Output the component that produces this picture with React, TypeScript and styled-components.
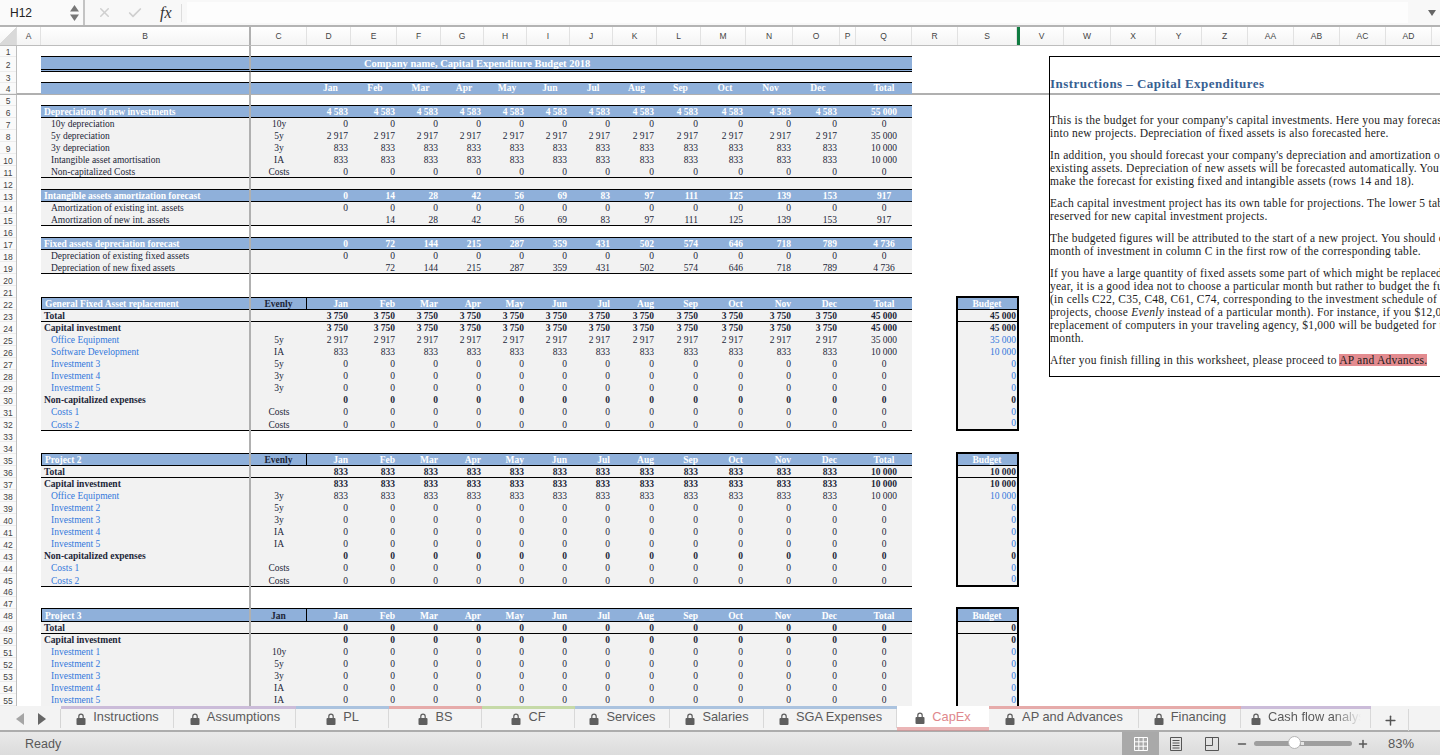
import styled, { createGlobalStyle } from 'styled-components';
import { Check, Minus, Plus, X } from 'lucide-react';

const GlobalStyle = createGlobalStyle`
  html, body {
    margin: 0;
    padding: 0;
    background: #fff;
    overflow: hidden;
  }
`;

const SHEET_COLUMNS = '17px 24px 210px 56px 44px 46px 44px 43px 43px 43px 43px 44px 44px 45px 47px 47px 16px 56px 44px 63px 1fr';

const sans = `"Liberation Sans", Arial, sans-serif`;
const serif = `"Liberation Serif", "Times New Roman", serif`;

const Page = styled.div`
  display: flex;
  flex-direction: column;
  width: 1440px;
  height: 755px;
  overflow: hidden;
  font-family: ${sans};

  > * {
    flex: none;
  }
`;

/* formula bar */
const FormulaBar = styled.div`
  display: flex;
  align-items: center;
  box-sizing: border-box;
  height: 27px;
  background: #f8f8f8;
  border-bottom: 2px solid #b4b4b4;
`;

const NameBox = styled.div`
  display: flex;
  align-items: center;
  justify-content: space-between;
  box-sizing: border-box;
  width: 85px;
  height: 100%;
  padding: 0 4px 0 10px;
  border-right: 2px solid #c4c4c4;
  background: #fafafa;
  font-size: 12px;
  color: #222;
`;

const Stepper = styled.svg`
  width: 9px;
  height: 18px;
  fill: #777;
`;

const BarIcons = styled.div`
  display: flex;
  align-items: center;
  gap: 15px;
  width: 102px;
  height: 100%;
  padding-left: 12px;
  box-sizing: border-box;
  color: #cfcfcf;
`;

const FxLabel = styled.span`
  margin-left: 2px;
  padding-right: 9px;
  border-right: 1px solid #ddd;
  font-family: ${serif};
  font-style: italic;
  font-size: 16px;
  color: #333;
`;

const FormulaInput = styled.div`
  flex: 1;
  height: 21px;
  margin-right: 24px;
  background: #fdfdfd;
`;

const Dropdown = styled.svg`
  position: relative;
  left: -4px;
  width: 8px;
  height: 6px;
  fill: #666;
`;

/* column letters */
const ColumnStrip = styled.div`
  display: flex;
  height: 19px;
  box-sizing: border-box;
  background: linear-gradient(#ffffff, #f4f4f4);
  border-bottom: 1px solid #bdbdbd;
`;

const Corner = styled.div`
  width: 17px;
  flex: none;
  background: linear-gradient(135deg, transparent 50%, #d9d9d9 50%);
  border-right: 1px solid #ddd;
  box-sizing: border-box;
`;

const ColumnName = styled.div<{ $w: number; $freeze?: boolean }>`
  display: flex;
  align-items: center;
  justify-content: center;
  flex: none;
  box-sizing: border-box;
  width: ${p => p.$w}px;
  border-right: ${p => (p.$freeze ? '2px solid #b0b0b0' : '1px solid #e2e2e2')};
  font-size: 8.5px;
  color: #444;
`;

const GreenMark = styled.div`
  width: 3px;
  flex: none;
  background: #107c41;
`;

/* grid */
const Sheet = styled.div`
  position: relative;
  height: 660px;
  overflow: hidden;
  background: #fff;
`;

const SheetRow = styled.div<{ $h: number; $freeze?: boolean }>`
  display: grid;
  grid-template-columns: ${SHEET_COLUMNS};
  box-sizing: border-box;
  height: ${p => p.$h}px;
  border-bottom: ${p => (p.$freeze ? '2px solid #b0b0b0' : '0')};
`;

const RowNumber = styled.div`
  display: flex;
  align-items: center;
  justify-content: center;
  box-sizing: border-box;
  padding-top: 1px;
  background: #fafafa;
  border-right: 1px solid #bdbdbd;
  box-shadow: inset 0 -1px 0 #ececec;
  font-size: 8.5px;
  color: #444;
`;

type Tone = 'head' | 'grey' | 'none';
type Ink = 'white' | 'dark' | 'blue';
type Rule = 'thin' | 'double' | 'none';

const tones: Record<Tone, string> = { head: '#8fb0da', grey: '#f2f2f2', none: 'transparent' };
const inks: Record<Ink, string> = { white: '#ffffff', dark: '#1c2638', blue: '#3278dc' };

const Cell = styled.div<{
  $tone?: Tone;
  $ink?: Ink;
  $bold?: boolean;
  $align?: 'left' | 'right' | 'center';
  $rule?: Rule;
  $pad?: number;
  $freeze?: boolean;
  $boxLeft?: boolean;
  $boxRight?: boolean;
}>`
  display: flex;
  align-items: flex-end;
  justify-content: ${p => (p.$align === 'right' ? 'flex-end' : p.$align === 'center' ? 'center' : 'flex-start')};
  box-sizing: border-box;
  min-width: 0;
  padding: ${p => (p.$align === 'right' ? `0 ${p.$pad ?? 3}px 0 0` : `0 0 0 ${p.$pad ?? 0}px`)};
  background: ${p => tones[p.$tone ?? 'none']};
  border-bottom: ${p => (p.$rule === 'double' ? '3px double #000' : '0')};
  box-shadow: ${p => (p.$rule === 'thin' ? 'inset 0 -1px 0 #000' : 'none')};
  border-right: ${p => (p.$freeze ? '2px solid #b0b0b0' : p.$boxRight ? '1px solid #000' : '0')};
  border-left: ${p => (p.$boxLeft ? '1px solid #000' : '0')};
  font-family: ${serif};
  font-size: 9.5px;
  line-height: 11px;
  font-weight: ${p => (p.$bold ? 700 : 400)};
  color: ${p => inks[p.$ink ?? 'dark']};
  white-space: nowrap;
`;

const TitleCell = styled(Cell)`
  grid-column: span 15;
  align-items: center;
  padding-left: 113px;
  font-size: 10.5px;
`;

const BudgetCell = styled.div<{ $role: 'head' | 'body' | 'top' | 'last'; $ink?: Ink; $bold?: boolean; $rule?: boolean }>`
  display: flex;
  align-items: flex-end;
  justify-content: ${p => (p.$role === 'head' ? 'center' : 'flex-end')};
  box-sizing: border-box;
  padding-right: 1px;
  background: ${p => (p.$role === 'head' ? tones.head : p.$role === 'top' ? 'transparent' : tones.grey)};
  border-left: ${p => (p.$role === 'top' ? '0' : '2px solid #000')};
  border-right: ${p => (p.$role === 'top' ? '0' : '2px solid #000')};
  border-bottom: ${p => (p.$role === 'top' || p.$role === 'last' ? '2px solid #000' : '0')};
  box-shadow: ${p => (p.$rule ? 'inset 0 -1px 0 #000' : 'none')};
  font-family: ${serif};
  font-size: 9.5px;
  line-height: 11px;
  font-weight: ${p => (p.$bold ? 700 : 400)};
  color: ${p => inks[p.$ink ?? 'dark']};
`;

/* floating instructions box */
const InstructionBox = styled.div`
  position: absolute;
  top: 10px;
  left: 1049px;
  right: 0;
  height: 321px;
  box-sizing: border-box;
  overflow: hidden;
  padding-top: 19px;
  border: 1px solid #000;
  border-right: 0;
  font-family: ${serif};
  color: #1c1c1c;
  white-space: nowrap;
`;

const InstructionTitle = styled.div`
  margin-bottom: 23px;
  font-size: 13px;
  letter-spacing: 0.45px;
  line-height: 15px;
  font-weight: 700;
  color: #376092;
`;

const Paragraph = styled.p`
  margin: 0 0 8.7px;
  font-size: 11.5px;
  letter-spacing: 0.25px;
  line-height: 13.1px;
`;

const LinkMark = styled.span`
  background: #e38b8f;
`;

/* sheet tabs */
const TabBar = styled.div`
  display: flex;
  height: 26px;
  box-sizing: border-box;
  background: #f3f3f3;
  border-bottom: 2px solid #acacac;
`;

const TabNav = styled.div`
  display: flex;
  align-items: center;
  gap: 12px;
  box-sizing: border-box;
  width: 61px;
  padding-left: 15px;
  border-right: 1px solid #d4d4d4;
  margin: 3px 0 2px;
`;

const NavArrow = styled.svg<{ $dim?: boolean }>`
  width: 10px;
  height: 12px;
  fill: ${p => (p.$dim ? '#a5a5a5' : '#666')};
`;

const Tab = styled.div<{ $w: number; $strip?: string; $active?: boolean }>`
  display: flex;
  align-items: center;
  justify-content: center;
  gap: 7px;
  flex: none;
  box-sizing: border-box;
  width: ${p => p.$w}px;
  height: ${p => (p.$active ? '24px' : '22px')};
  padding-top: ${p => (p.$active ? '3px' : '0')};
  background: ${p => (p.$active ? '#fff' : 'transparent')};
  border-top: ${p => (p.$active ? '0' : `3px solid ${p.$strip}`)};
  border-bottom: ${p => (p.$active ? '3px solid #ebb5b6' : '0')};
  box-shadow: ${p => (p.$active ? '0 1px 0 #c79a9b' : 'inset -1px 0 0 #d8d8d8')};
  font-size: 12.8px;
  color: ${p => (p.$active ? '#e0878c' : '#5a5a5a')};
`;

const TabLabel = styled.span<{ $fade?: boolean }>`
  position: relative;
  top: -2px;
  white-space: nowrap;
  ${p => p.$fade && `
    width: 93px;
    overflow: hidden;
    -webkit-mask-image: linear-gradient(90deg, #000 70%, transparent);
    mask-image: linear-gradient(90deg, #000 70%, transparent);
  `}
`;

const LockIcon = styled.svg`
  width: 10px;
  height: 12px;
  flex: none;
  fill: #5e5e5e;
`;

const AddTab = styled.div`
  display: flex;
  align-items: center;
  justify-content: center;
  width: 38px;
  height: 22px;
  margin-top: 3px;
  color: #555;
  box-shadow: inset -1px 0 0 #d8d8d8;
`;

/* status bar */
const StatusBar = styled.div`
  display: flex;
  align-items: center;
  justify-content: space-between;
  height: 23px;
  padding-left: 25px;
  background: linear-gradient(#e9e9e9, #dcdcdc);
  font-size: 12.5px;
  color: #585858;
`;

const StatusRight = styled.div`
  display: flex;
  align-items: center;
  height: 100%;
`;

const ViewButton = styled.div<{ $on?: boolean; $w: number }>`
  display: flex;
  align-items: center;
  justify-content: center;
  width: ${p => p.$w}px;
  height: 100%;
  background: ${p => (p.$on ? '#a9a9a9' : 'transparent')};
`;

const ViewIcon = styled.svg<{ $on?: boolean }>`
  width: 16px;
  height: 16px;
  fill: none;
  stroke: ${p => (p.$on ? '#fff' : '#555')};
  stroke-width: 1;
`;

const ZoomOut = styled(Minus)`
  margin-left: 5px;
`;

const ZoomTrack = styled.div`
  position: relative;
  width: 98px;
  height: 5px;
  margin: 0 5px 0 6px;
  border-radius: 3px;
  background: #9e9e9e;

  &::after {
    position: absolute;
    top: 1px;
    left: 47px;
    width: 3px;
    height: 3px;
    background: #e4e4e4;
    content: '';
  }
`;

const ZoomThumb = styled.div`
  position: absolute;
  top: -5px;
  left: 34px;
  width: 13px;
  height: 13px;
  box-sizing: border-box;
  border-radius: 50%;
  background: #fff;
  border: 1px solid #b5b5b5;
`;

const ZoomValue = styled.span`
  width: 71px;
  padding-left: 19px;
  box-sizing: border-box;
  font-size: 13px;
`;

interface RowSpec {
  h?: number;
  tone?: Tone;
  ink?: Ink;
  bold?: boolean;
  label?: string;
  labelInk?: Ink;
  indent?: boolean;
  tag?: string;
  boxed?: boolean;
  vals?: string[];
  centerVals?: boolean;
  total?: string;
  budget?: string;
  budgetInk?: Ink;
  budgetRole?: 'head' | 'body' | 'top' | 'last';
  budgetRule?: boolean;
  rule?: Rule;
  title?: string;
  freeze?: boolean;
}

const months = ['Jan', 'Feb', 'Mar', 'Apr', 'May', 'Jun', 'Jul', 'Aug', 'Sep', 'Oct', 'Nov', 'Dec'];
const rep = (v: string) => Array<string>(12).fill(v);

const gap = (rule?: Rule, top?: boolean, h = 12): RowSpec => ({ h, rule, budgetRole: top ? 'top' : undefined });

const line = (label: string, tag: string, v: string, total: string, extra: Partial<RowSpec> = {}): RowSpec => ({
  tone: 'grey', label, tag, vals: rep(v), total, indent: true, ...extra,
});

function projectHead(label: string, tag: string): RowSpec {
  return {
    tone: 'head', ink: 'white', bold: true, label, tag, boxed: true, vals: months, total: 'Total',
    rule: 'thin', budget: 'Budget', budgetRole: 'head', budgetRule: true,
  };
}

function summary(label: string, v: string, total: string, rule?: Rule): RowSpec {
  return {
    tone: 'grey', bold: true, label, vals: rep(v), total, budget: total, budgetRole: 'body',
    budgetRule: rule === 'thin', rule,
  };
}

function input(label: string, tag: string, v: string, total: string, last = false): RowSpec {
  return {
    ...line(label, tag, v, total), labelInk: 'blue', budget: total, budgetInk: 'blue',
    budgetRole: last ? 'last' : 'body', rule: last ? 'thin' : undefined,
  };
}

const amort = ['14', '28', '42', '56', '69', '83', '97', '111', '125', '139', '153'];
const fixed = ['72', '144', '215', '287', '359', '431', '502', '574', '646', '718', '789'];

const rows: RowSpec[] = [
  { h: 11, rule: 'thin' },
  { h: 15, tone: 'head', title: 'Company name, Capital Expenditure Budget 2018', rule: 'double' },
  { h: 11, rule: 'thin' },
  { tone: 'head', ink: 'white', bold: true, vals: months, centerVals: true, total: 'Total', freeze: true },
  { h: 11, rule: 'thin' },
  { tone: 'head', ink: 'white', bold: true, label: 'Depreciation of new investments', vals: rep('4 583'), total: '55 000', rule: 'thin' },
  line('10y depreciation', '10y', '0', '0'),
  line('5y depreciation', '5y', '2 917', '35 000'),
  line('3y depreciation', '3y', '833', '10 000'),
  line('Intangible asset amortisation', 'IA', '833', '10 000'),
  line('Non-capitalized Costs', 'Costs', '0', '0', { rule: 'thin' }),
  { tone: 'grey', rule: 'thin' },
  { tone: 'head', ink: 'white', bold: true, label: 'Intangible assets amortization forecast', vals: ['0', ...amort], total: '917', rule: 'thin' },
  line('Amortization of existing int. assets', '', '0', '0'),
  line('Amortization of new int. assets', '', '', '917', { vals: ['', ...amort], rule: 'thin' }),
  gap('thin'),
  { tone: 'head', ink: 'white', bold: true, label: 'Fixed assets depreciation forecast', vals: ['0', ...fixed], total: '4 736', rule: 'thin' },
  line('Depreciation of existing fixed assets', '', '0', '0'),
  line('Depreciation of new fixed assets', '', '', '4 736', { vals: ['', ...fixed], rule: 'thin' }),
  gap(),
  gap('thin', true),
  projectHead('General Fixed Asset replacement', 'Evenly'),
  summary('Total', '3 750', '45 000', 'thin'),
  summary('Capital investment', '3 750', '45 000'),
  input('Office Equipment', '5y', '2 917', '35 000'),
  input('Software Development', 'IA', '833', '10 000'),
  input('Investment 3', '5y', '0', '0'),
  input('Investment 4', '3y', '0', '0'),
  input('Investment 5', '3y', '0', '0'),
  summary('Non-capitalized expenses', '0', '0'),
  input('Costs 1', 'Costs', '0', '0'),
  input('Costs 2', 'Costs', '0', '0', true),
  gap(),
  gap('thin', true),
  projectHead('Project 2', 'Evenly'),
  summary('Total', '833', '10 000', 'thin'),
  summary('Capital investment', '833', '10 000'),
  input('Office Equipment', '3y', '833', '10 000'),
  input('Investment 2', '5y', '0', '0'),
  input('Investment 3', '3y', '0', '0'),
  input('Investment 4', 'IA', '0', '0'),
  input('Investment 5', 'IA', '0', '0'),
  summary('Non-capitalized expenses', '0', '0'),
  input('Costs 1', 'Costs', '0', '0'),
  { ...input('Costs 2', 'Costs', '0', '0', true), h: 11 },
  gap(),
  gap('thin', true),
  { ...projectHead('Project 3', 'Jan'), h: 13 },
  summary('Total', '0', '0', 'thin'),
  summary('Capital investment', '0', '0'),
  input('Investment 1', '10y', '0', '0'),
  input('Investment 2', '5y', '0', '0'),
  input('Investment 3', '3y', '0', '0'),
  input('Investment 4', 'IA', '0', '0'),
  input('Investment 5', 'IA', '0', '0'),
];

// right padding per month column, the widths are not even
const monthPad = [3, 2, 3, 3, 3, 3, 3, 3, 3, 3, 2, 3];

const columnNames: [string, number][] = [
  ['A', 24], ['B', 210], ['C', 56], ['D', 44], ['E', 46], ['F', 44], ['G', 43], ['H', 43], ['I', 43], ['J', 43],
  ['K', 44], ['L', 44], ['M', 45], ['N', 47], ['O', 47], ['P', 16], ['Q', 56], ['R', 46], ['S', 59],
];
const columnNamesRight: [string, number][] = [
  ['V', 44], ['W', 47], ['X', 45], ['Y', 46], ['Z', 46], ['AA', 46], ['AB', 46], ['AC', 46], ['AD', 46],
];

const purple = '#cbbcd9';
const blue = '#abc3df';
const pink = '#e6abaa';
const green = '#c6daa8';

const tabs: { name: string; w: number; strip?: string; active?: boolean; fade?: boolean }[] = [
  { name: 'Instructions', w: 113, strip: purple },
  { name: 'Assumptions', w: 122, strip: purple },
  { name: 'PL', w: 93, strip: blue },
  { name: 'BS', w: 93, strip: pink },
  { name: 'CF', w: 93, strip: green },
  { name: 'Services', w: 95, strip: blue },
  { name: 'Salaries', w: 94, strip: blue },
  { name: 'SGA Expenses', w: 133, strip: blue },
  { name: 'CapEx', w: 92, active: true },
  { name: 'AP and Advances', w: 150, strip: pink },
  { name: 'Financing', w: 102, strip: pink },
  { name: 'Cash flow analysis', w: 130, strip: purple, fade: true },
];

function Lock() {
  return (
    <LockIcon viewBox="0 0 10 12">
      <path d="M2.2 5V3.4a2.8 2.8 0 0 1 5.6 0V5H6.6V3.4a1.6 1.6 0 0 0-3.2 0V5z" />
      <rect x="0.5" y="5" width="9" height="7" rx="1" />
    </LockIcon>
  );
}

function SheetRows() {
  return (
    <>
      {rows.map((row, i) => {
        const { tone, ink, bold, rule } = row;
        const shared = { $tone: tone, $rule: rule };
        return (
          <SheetRow key={i} $h={row.h ?? 12} $freeze={row.freeze}>
            <RowNumber>{i + 1}</RowNumber>
            <div />
            <Cell
              {...shared}
              $ink={row.labelInk ?? ink}
              $bold={bold}
              $pad={row.indent ? 10 : 3}
              $freeze
              $boxLeft={row.boxed}
            >
              {row.label}
            </Cell>
            {row.title ? (
              <TitleCell {...shared} $ink="white" $bold>{row.title}</TitleCell>
            ) : (
              <>
                <Cell {...shared} $ink={row.boxed ? 'dark' : ink} $bold={bold} $align="center" $boxRight={row.boxed}>
                  {row.tag}
                </Cell>
                {months.map((_, m) => (
                  <Cell
                    key={m}
                    {...shared}
                    $ink={ink}
                    $bold={bold}
                    $align={row.centerVals ? 'center' : 'right'}
                    $pad={monthPad[m]}
                  >
                    {row.vals?.[m]}
                  </Cell>
                ))}
                <Cell {...shared} />
                <Cell {...shared} $ink={ink} $bold={bold} $align="center">{row.total}</Cell>
              </>
            )}
            <div />
            {row.budgetRole ? (
              <BudgetCell
                $role={row.budgetRole}
                $ink={row.budgetRole === 'head' ? 'white' : row.budgetInk}
                $bold={row.budgetRole === 'head' || bold}
                $rule={row.budgetRule}
              >
                {row.budget}
              </BudgetCell>
            ) : (
              <div />
            )}
            <div />
          </SheetRow>
        );
      })}
    </>
  );
}

export default function App() {
  return (
    <Page>
      <GlobalStyle />
      <FormulaBar>
        <NameBox>
          H12
          <Stepper viewBox="0 0 9 18">
            <path d="M4.5 1 9 7.5H0z" />
            <path d="M4.5 17 0 10.5h9z" />
          </Stepper>
        </NameBox>
        <BarIcons>
          <X size={15} strokeWidth={2.4} />
          <Check size={16} strokeWidth={2.6} />
          <FxLabel>fx</FxLabel>
        </BarIcons>
        <FormulaInput />
        <Dropdown viewBox="0 0 8 6">
          <path d="M0 0h8L4 6z" />
        </Dropdown>
      </FormulaBar>

      <ColumnStrip>
        <Corner />
        {columnNames.map(([name, w]) => (
          <ColumnName key={name} $w={w} $freeze={name === 'B'}>{name}</ColumnName>
        ))}
        <GreenMark />
        {columnNamesRight.map(([name, w]) => (
          <ColumnName key={name} $w={w}>{name}</ColumnName>
        ))}
      </ColumnStrip>

      <Sheet>
        <SheetRows />
        <InstructionBox>
          <InstructionTitle>Instructions – Capital Expenditures</InstructionTitle>
          <Paragraph>
            This is the budget for your company's capital investments. Here you may forecast your investment<br />
            into new projects. Depreciation of fixed assets is also forecasted here.
          </Paragraph>
          <Paragraph>
            In addition, you should forecast your company's depreciation and amortization of<br />
            existing assets. Depreciation of new assets will be forecasted automatically. You just need to<br />
            make the forecast for existing fixed and intangible assets (rows 14 and 18).
          </Paragraph>
          <Paragraph>
            Each capital investment project has its own table for projections. The lower 5 tables are<br />
            reserved for new capital investment projects.
          </Paragraph>
          <Paragraph>
            The budgeted figures will be attributed to the start of a new project. You should choose the<br />
            month of investment in column C in the first row of the corresponding table.
          </Paragraph>
          <Paragraph>
            If you have a large quantity of fixed assets some part of which might be replaced every<br />
            year, it is a good idea not to choose a particular month but rather to budget the full amount<br />
            (in cells C22, C35, C48, C61, C74, corresponding to the investment schedule of each of the<br />
            projects, choose <em>Evenly</em> instead of a particular month). For instance, if you $12,000 for<br />
            replacement of computers in your traveling agency, $1,000 will be budgeted for the<br />
            month.
          </Paragraph>
          <Paragraph>
            After you finish filling in this worksheet, please proceed to <LinkMark>AP and Advances.</LinkMark>
          </Paragraph>
        </InstructionBox>
      </Sheet>

      <TabBar>
        <TabNav>
          <NavArrow $dim viewBox="0 0 10 12"><path d="M9 0v12L1 6z" /></NavArrow>
          <NavArrow viewBox="0 0 10 12"><path d="M1 0v12l8-6z" /></NavArrow>
        </TabNav>
        {tabs.map(tab => (
          <Tab key={tab.name} $w={tab.w} $strip={tab.strip} $active={tab.active}>
            <Lock />
            <TabLabel $fade={tab.fade}>{tab.name}</TabLabel>
          </Tab>
        ))}
        <AddTab><Plus size={15} strokeWidth={2.4} /></AddTab>
      </TabBar>

      <StatusBar>
        Ready
        <StatusRight>
          <ViewButton $on $w={37}>
            <ViewIcon $on viewBox="0 0 16 16">
              <path d="M1.5 1.5h13v13h-13zM1.5 5.8h13M1.5 10.2h13M5.8 1.5v13M10.2 1.5v13" />
            </ViewIcon>
          </ViewButton>
          <ViewButton $w={34}>
            <ViewIcon viewBox="0 0 16 16">
              <path d="M2.5 1.5h11v13h-11zM4.5 4.5h7M4.5 7h7M4.5 9.5h7M4.5 12h7" />
            </ViewIcon>
          </ViewButton>
          <ViewButton $w={38}>
            <ViewIcon viewBox="0 0 16 16">
              <path d="M1.5 1.5h13v13h-13zM1.5 9.5h7v-8" />
            </ViewIcon>
          </ViewButton>
          <ZoomOut size={12} strokeWidth={3} />
          <ZoomTrack><ZoomThumb /></ZoomTrack>
          <Plus size={12} strokeWidth={3} />
          <ZoomValue>83%</ZoomValue>
        </StatusRight>
      </StatusBar>
    </Page>
  );
}
